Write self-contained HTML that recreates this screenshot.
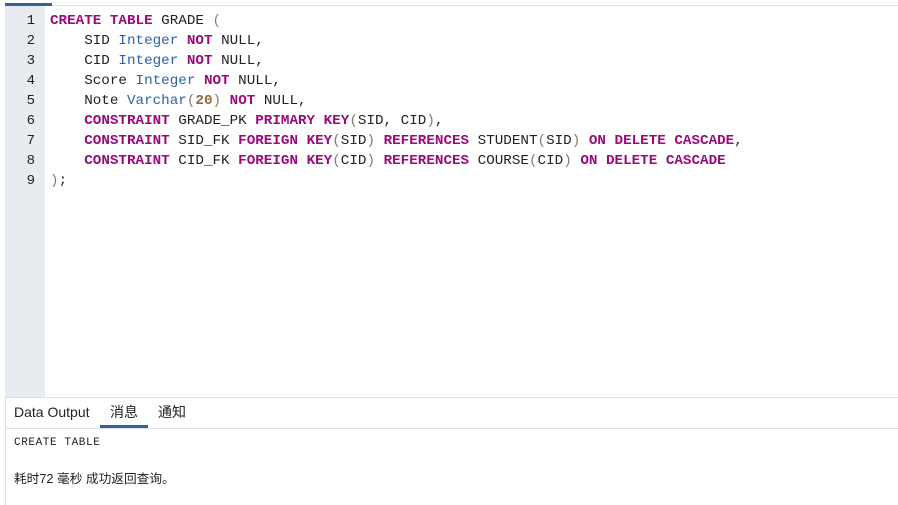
<!DOCTYPE html><html><head><meta charset="utf-8"><style>
body{margin:0;width:898px;height:505px;background:#fff;position:relative;overflow:hidden;font-family:"Liberation Sans","Noto Sans CJK SC",sans-serif}
.top{position:absolute;left:5px;top:5px;width:893px;height:1px;background:#dde0e6}
.tabb{position:absolute;left:5px;top:3px;width:47px;height:3px;background:#326690}
.gut{position:absolute;left:5px;top:6px;width:40px;height:391px;background:#e8ecf1}
.ln{position:absolute;left:5px;width:30px;text-align:right;font:14px "Liberation Mono",monospace;color:#222}
.code{position:absolute;left:50px;top:11px;font:14.25px/20px "Liberation Mono",monospace;color:#222;white-space:pre}
.k{color:#990a7d;font-weight:bold}.t{color:#2d62a8}.n{color:#8a6b3a;font-weight:bold}.p{color:#8a7a6a}
.sep{position:absolute;left:5px;top:397px;width:893px;height:1px;background:#dde0e6}
.sep2{position:absolute;left:5px;top:428px;width:893px;height:1px;background:#dde0e6}
.tabs{position:absolute;top:402px;height:20px;line-height:20px;font-size:14px;color:#222}
.ul{position:absolute;left:100px;top:425px;width:48px;height:3px;background:#326690}
.l{position:absolute;left:5px;top:398px;width:1px;height:107px;background:#dde0e6}
</style></head><body>
<div class="top"></div><div class="tabb"></div><div class="gut"></div>
<div class="ln" style="top:13px">1</div><div class="ln" style="top:33px">2</div><div class="ln" style="top:53px">3</div><div class="ln" style="top:73px">4</div><div class="ln" style="top:93px">5</div><div class="ln" style="top:113px">6</div><div class="ln" style="top:133px">7</div><div class="ln" style="top:153px">8</div><div class="ln" style="top:173px">9</div>
<div class="code"><span class="k">CREATE TABLE</span> GRADE <span class="p">(</span>
    SID <span class="t">Integer</span> <span class="k">NOT</span> NULL,
    CID <span class="t">Integer</span> <span class="k">NOT</span> NULL,
    Score <span class="t">Integer</span> <span class="k">NOT</span> NULL,
    Note <span class="t">Varchar</span><span class="p">(</span><span class="n">20</span><span class="p">)</span> <span class="k">NOT</span> NULL,
    <span class="k">CONSTRAINT</span> GRADE_PK <span class="k">PRIMARY KEY</span><span class="p">(</span>SID, CID<span class="p">)</span>,
    <span class="k">CONSTRAINT</span> SID_FK <span class="k">FOREIGN KEY</span><span class="p">(</span>SID<span class="p">)</span> <span class="k">REFERENCES</span> STUDENT<span class="p">(</span>SID<span class="p">)</span> <span class="k">ON DELETE CASCADE</span>,
    <span class="k">CONSTRAINT</span> CID_FK <span class="k">FOREIGN KEY</span><span class="p">(</span>CID<span class="p">)</span> <span class="k">REFERENCES</span> COURSE<span class="p">(</span>CID<span class="p">)</span> <span class="k">ON DELETE CASCADE</span>
<span class="p">)</span>;</div>
<div class="sep"></div><div class="l"></div>
<div class="tabs" style="left:14px">Data Output</div>
<div class="tabs" style="left:110px">消息</div>
<div class="tabs" style="left:158px">通知</div>
<div class="ul"></div><div class="sep2"></div>
<div style="position:absolute;left:14px;top:437px;font:11px 'Liberation Mono',monospace;letter-spacing:0.6px;color:#222">CREATE TABLE</div>
<div style="position:absolute;left:14px;top:468px;font-size:12.7px;color:#222">耗时72 毫秒 成功返回查询。</div>
</body></html>
